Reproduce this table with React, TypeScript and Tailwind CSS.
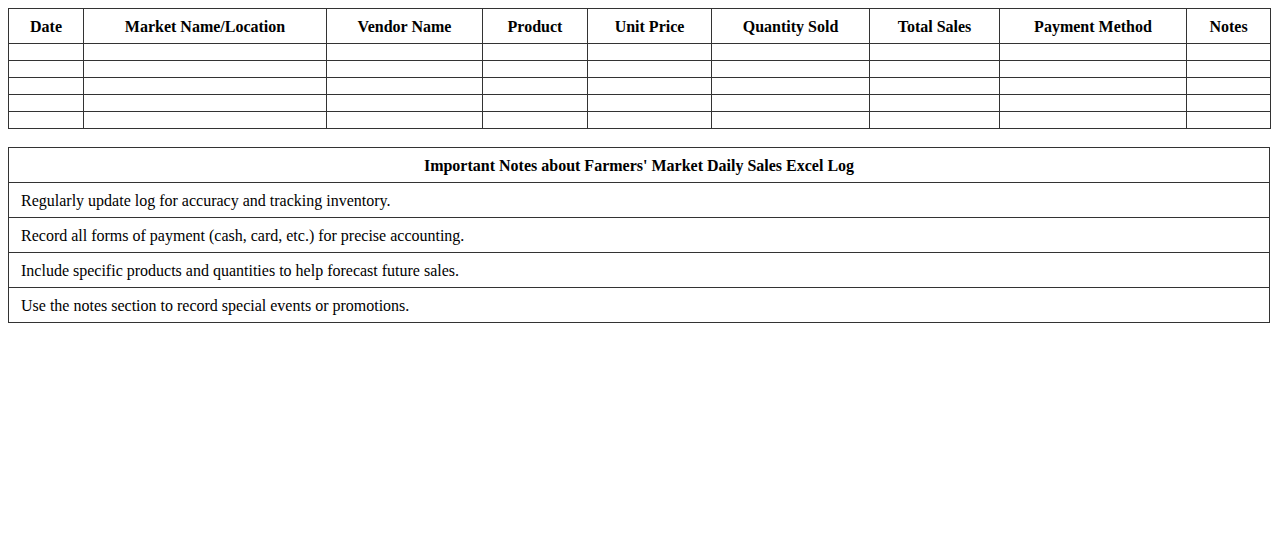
import React from "react";

const cols = [
  { name: "Date", w: 75 },
  { name: "Market Name/Location", w: 243 },
  { name: "Vendor Name", w: 156 },
  { name: "Product", w: 105 },
  { name: "Unit Price", w: 124 },
  { name: "Quantity Sold", w: 158 },
  { name: "Total Sales", w: 130 },
  { name: "Payment Method", w: 187 },
  { name: "Notes", w: 84 },
];

const notes = [
  "Regularly update log for accuracy and tracking inventory.",
  "Record all forms of payment (cash, card, etc.) for precise accounting.",
  "Include specific products and quantities to help forecast future sales.",
  "Use the notes section to record special events or promotions.",
];

export default function App() {
  return (
    <div
      className="p-2 bg-white text-black text-[16px] leading-[18px]"
      style={{ fontFamily: '"Liberation Serif", "Times New Roman", serif' }}
    >
      <table className="w-full table-fixed border-collapse">
        <colgroup>
          {cols.map((c) => (
            <col key={c.name} style={{ width: c.w }} />
          ))}
        </colgroup>
        <thead>
          <tr>
            {cols.map((c) => (
              <th
                key={c.name}
                className="border border-[#333] px-3 pt-[9px] pb-[7px] font-bold text-center h-[35px]"
              >
                {c.name}
              </th>
            ))}
          </tr>
        </thead>
        <tbody>
          {[0, 1, 2, 3, 4].map((r) => (
            <tr key={r}>
              {cols.map((c) => (
                <td key={c.name} className="border border-[#333] p-0 h-[17px]"></td>
              ))}
            </tr>
          ))}
        </tbody>
      </table>

      <table className="w-full border-collapse mt-[18px]">
        <thead>
          <tr>
            <th className="border border-[#333] px-3 pt-[9px] pb-[7px] font-bold text-center h-[35px]">
              Important Notes about Farmers' Market Daily Sales Excel Log
            </th>
          </tr>
        </thead>
        <tbody>
          {notes.map((n) => (
            <tr key={n}>
              <td className="border border-[#333] px-3 pt-[9px] pb-[7px] text-left h-[35px]">{n}</td>
            </tr>
          ))}
        </tbody>
      </table>
    </div>
  );
}
